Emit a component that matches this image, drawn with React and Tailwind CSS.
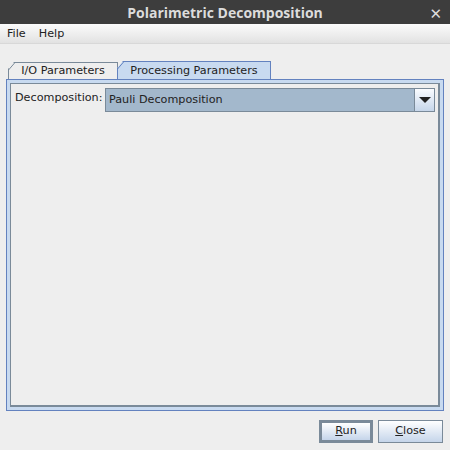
import { useState } from "react";

export default function App() {
  const [tab] = useState(1)
  const font = { fontFamily: `"DejaVu Sans", "Liberation Sans", sans-serif` }
  return (
    <div className="w-[450px] h-[450px] flex flex-col bg-[#eeeeee] overflow-hidden text-[11.2px] text-[#222]" style={font}>
      <div className="h-[24px] shrink-0 bg-[#3d3d3d] flex items-center relative">
        <div className="flex-1 text-center text-[14px] font-bold text-[#dcdcdc] [font-family:'Open_Sans',sans-serif]">Polarimetric Decomposition</div>
        <div className="absolute right-[8px] top-[3px] text-[#dcdcdc] text-[15px] font-bold">✕</div>
      </div>
      <div className="h-[20px] shrink-0 flex items-center gap-[13px] px-[7px] pt-[2px] bg-gradient-to-b from-[#fbfbfb] to-[#e2e2e2] border-b border-[#d8d8d8]">
        <span>File</span>
        <span>Help</span>
      </div>
      <div className="flex-1 flex flex-col px-[6px] pt-[17px]">
        <div className="flex h-[18px] pl-[2px] items-end">
          <div className="relative h-[17px] w-[110px] border-t border-l border-r border-[#7a8a99] [clip-path:polygon(6px_0,100%_0,100%_100%,0_100%,0_7px)] flex items-center justify-center pt-[1px] bg-[#eeeeee]">
            <svg className="absolute left-[-1px] top-[-1px]" width="8" height="9"><line x1="0.5" y1="8" x2="7" y2="0.5" stroke="#7a8a99" /></svg>
            <span className={tab === 0 ? "font-bold" : ""}>I/O Parameters</span>
          </div>
          <div className="relative h-[18px] w-[154px] border-t border-r border-l border-[#6382bf] bg-[#c8daf0] [clip-path:polygon(6px_0,100%_0,100%_100%,0_100%,0_7px)] flex items-center justify-center pt-[1px] -ml-px">
            <svg className="absolute left-[-1px] top-[-1px]" width="8" height="9"><line x1="0.5" y1="8" x2="7" y2="0.5" stroke="#6382bf" /></svg>
            <span>Processing Parameters</span>
          </div>
        </div>
        <div className="h-[332px] border border-[#6382bf] bg-[#c8daf0] p-[3px] flex">
          <div className="flex-1 border-t border-l border-[#7a8a99] border-b-2 border-r-2 bg-[#eeeeee]">
            <div className="flex items-start pt-[4px] pl-[4px]">
              <span className="w-[90px] pt-[2px]">Decomposition:</span>
              <div className="w-[330px] h-[24px] flex border border-[#7a8a99] bg-[#a3b8cc]">
                <div className="flex-1 flex items-center pl-[3px] border-r border-[#7a8a99]">Pauli Decomposition</div>
                <div className="w-[19px] bg-gradient-to-b from-[#fafcff] to-[#c6d6ea] flex items-center justify-center">
                  <svg width="12" height="7"><polygon points="0,0 12,0 6,6" fill="#222" /></svg>
                </div>
              </div>
            </div>
          </div>
        </div>
        <div className="flex justify-end gap-[5px] pr-[1px] pt-[9px]">
          <button className="w-[54px] h-[23px] border-[3px] border-[#7a8a99] bg-gradient-to-b from-[#ffffff] to-[#c5d5ea] flex items-center justify-center">
            <span><u>R</u>un</span>
          </button>
          <button className="w-[65px] h-[23px] border border-[#7a8a99] bg-gradient-to-b from-[#ffffff] to-[#c5d5ea] flex items-center justify-center">
            <span><u>C</u>lose</span>
          </button>
        </div>
      </div>
    </div>
  )
}
